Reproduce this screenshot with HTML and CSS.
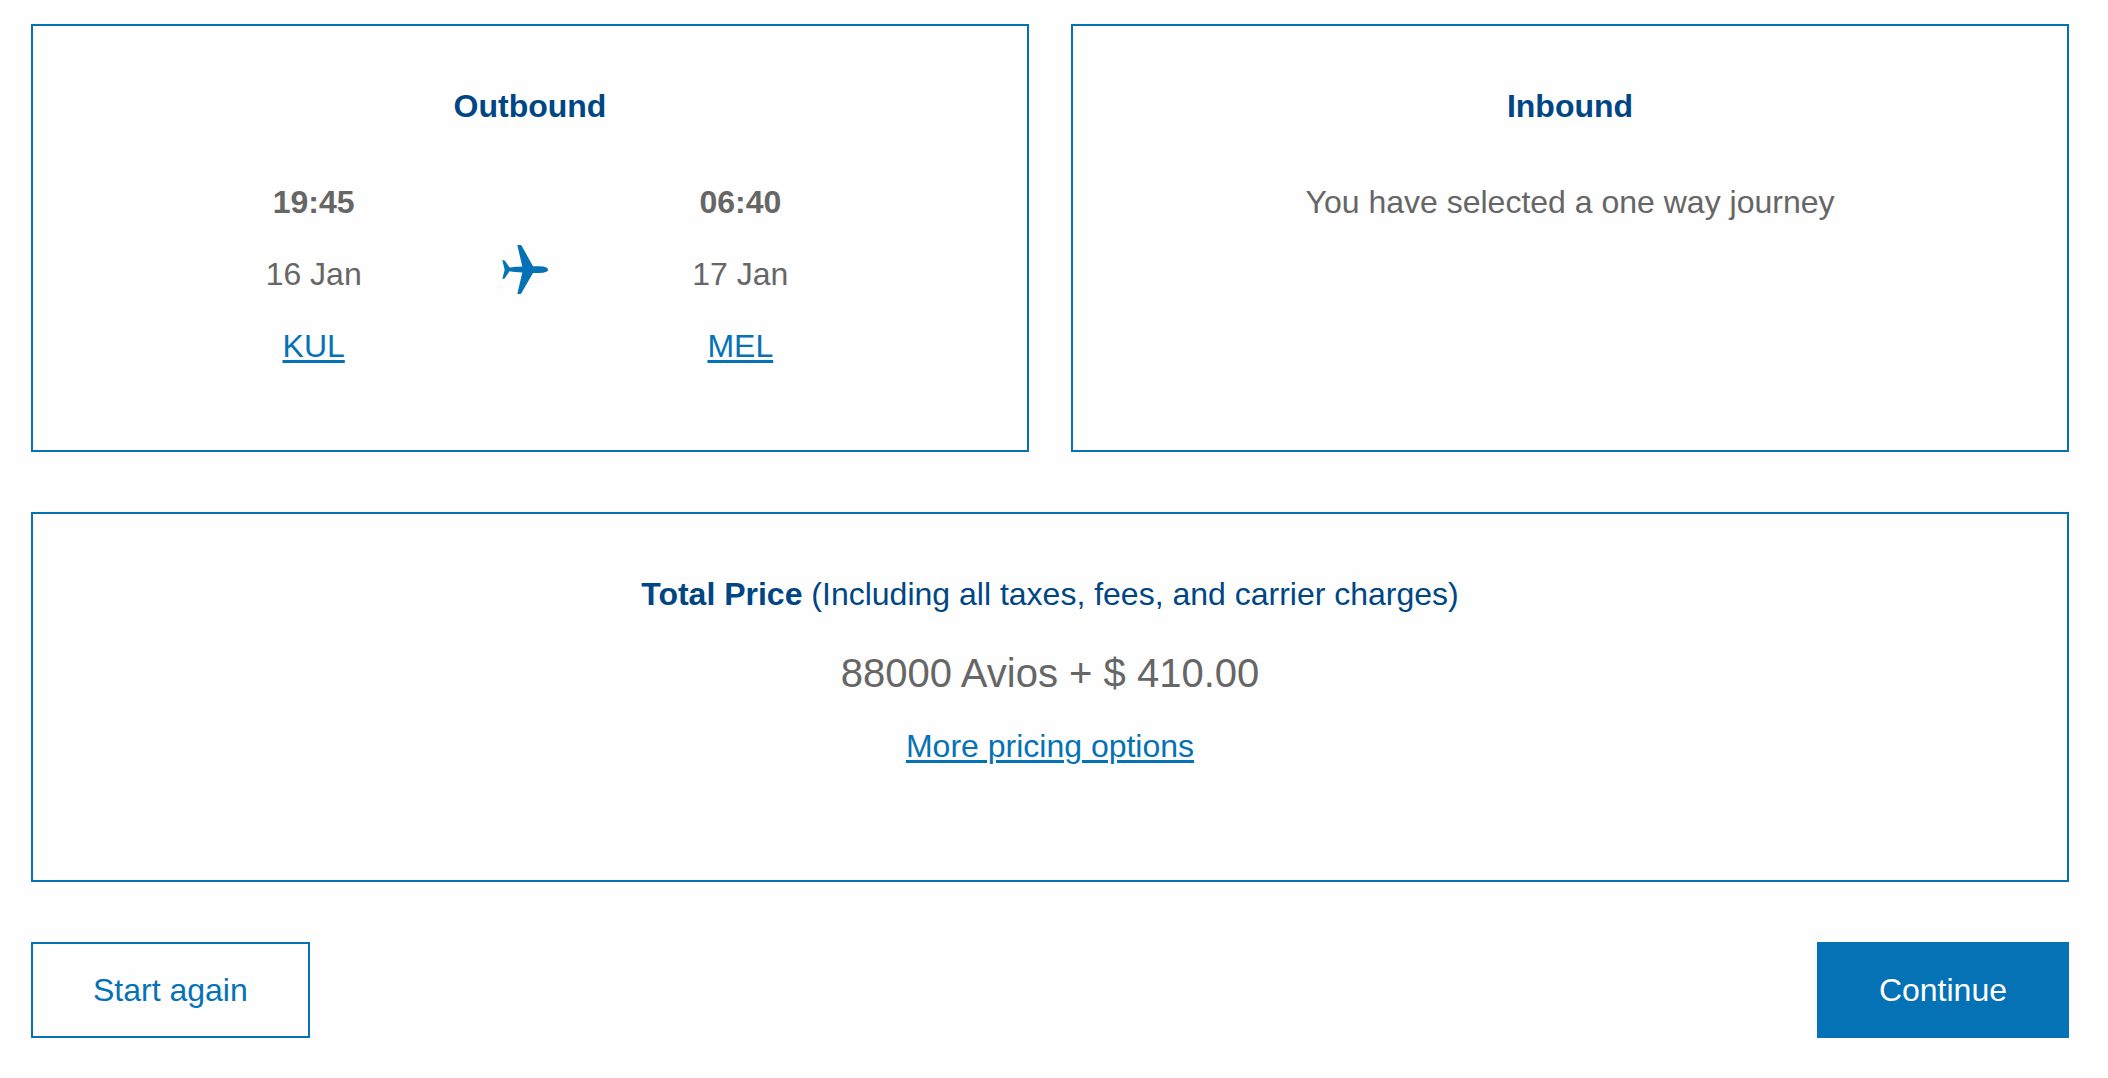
FILE: index.html
```html
<!DOCTYPE html>
<html lang="en">
<head>
<meta charset="utf-8">
<meta name="viewport" content="width=device-width, initial-scale=1">
<title>Your journey</title>
<link rel="stylesheet" href="styles.css">
</head>
<body>
<main class="page">
  <div class="journeys">
    <section class="panel journey">
      <h2 class="heading">Outbound</h2>
      <div class="flight">
        <div class="stop">
          <p class="time">19:45</p>
          <p class="text">16 Jan</p>
          <p class="text"><a class="link" href="#kul">KUL</a></p>
        </div>
        <svg class="plane" viewBox="0 0 50 58" aria-hidden="true"><path d="M15.3 0h3q1 0 1.5 1L31 21.3h7c5 .2 8 1.5 8 3.4s-3 3-8 3.200h-7L19.500 48q-.5 1-1.500 1h-2.700l5-21.500C15 27.300 11 27 7.500 26.300L3 33q-.5.8-1.300.8H.3l2.400-9.100L.3 15.200h1.400q.8 0 1.300.8l4.700 6.600c3.300-.5 7.500-.9 12.600-1z"/></svg>
        <div class="stop">
          <p class="time">06:40</p>
          <p class="text">17 Jan</p>
          <p class="text"><a class="link" href="#mel">MEL</a></p>
        </div>
      </div>
    </section>
    <section class="panel journey">
      <h2 class="heading">Inbound</h2>
      <p class="text">You have selected a one way journey</p>
    </section>
  </div>
  <section class="panel total">
    <h2 class="heading total-heading">Total Price <span class="note">(Including all taxes, fees, and carrier charges)</span></h2>
    <p class="price">88000 Avios + $ 410.00</p>
    <p class="text"><a class="link" href="#pricing">More pricing options</a></p>
  </section>
  <div class="actions">
    <button class="button" type="button">Start again</button>
    <button class="button primary" type="button">Continue</button>
  </div>
</main>
</body>
</html>
```
FILE: styles.css
```css
* { box-sizing: border-box; }
body { margin: 0; background: #fefefe; color: #666; font: 32px/40px "Liberation Sans", Arial, sans-serif; }
h2, p { margin: 0; }
.page { padding: 24px 39px 39px 31px; }
.journeys { display: grid; grid-template-columns: 1fr 1fr; gap: 42px; }
.panel { border: 2px solid #0572b5; text-align: center; }
.journey { min-height: 428px; padding: 60px 60px 64px; }
.heading { margin-bottom: 56px; color: #004685; font-size: 32px; line-height: 40px; font-weight: bold; }
.flight { display: grid; grid-template-columns: repeat(3, 1fr); align-items: center; padding: 0 120px 0 114px; }
.stop { display: grid; gap: 32px; }
.time { font-weight: bold; }
.link { color: #0572b5; text-decoration: underline; text-decoration-thickness: 3px; text-underline-offset: 3px; }
.plane { width: 50px; height: 58px; fill: #0572b5; justify-self: center; }
.total { min-height: 370px; margin-top: 60px; padding: 60px; }
.total-heading { margin-bottom: 36px; }
.note { font-weight: normal; }
.price { margin-bottom: 30px; font-size: 40px; line-height: 46px; }
.actions { display: flex; justify-content: space-between; margin-top: 60px; }
.button { height: 96px; padding: 0 60px; border: 2px solid #0572b5; background: #fefefe; color: #0572b5; font: inherit; }
.primary { background: #0572b5; color: #fff; }
```
